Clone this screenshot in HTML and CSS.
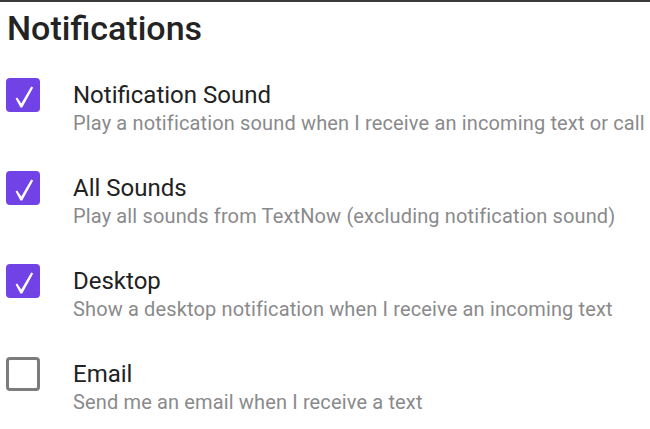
FILE: index.html
```html
<!DOCTYPE html>
<html>
<head>
<meta charset="utf-8">
<link rel="stylesheet" href="styles.css">
</head>
<body>
<div class="page">
  <h1 class="heading">Notifications</h1>
  <div class="list">
    <div class="row">
      <span class="box checked"><svg viewBox="0 0 34 34" width="34" height="34"><path d="M9.6 20.4 L11.2 19.4 L15.3 25.4 L25.2 8.6 L27.2 9.6 L16.2 29.4 L14.4 29.4 Z" fill="#fff"/></svg></span>
      <div class="text">
        <div class="title">Notification Sound</div>
        <div class="desc">Play a notification sound when I receive an incoming text or call</div>
      </div>
    </div>
    <div class="row">
      <span class="box checked"><svg viewBox="0 0 34 34" width="34" height="34"><path d="M9.6 20.4 L11.2 19.4 L15.3 25.4 L25.2 8.6 L27.2 9.6 L16.2 29.4 L14.4 29.4 Z" fill="#fff"/></svg></span>
      <div class="text">
        <div class="title">All Sounds</div>
        <div class="desc">Play all sounds from TextNow (excluding notification sound)</div>
      </div>
    </div>
    <div class="row">
      <span class="box checked"><svg viewBox="0 0 34 34" width="34" height="34"><path d="M9.6 20.4 L11.2 19.4 L15.3 25.4 L25.2 8.6 L27.2 9.6 L16.2 29.4 L14.4 29.4 Z" fill="#fff"/></svg></span>
      <div class="text">
        <div class="title">Desktop</div>
        <div class="desc">Show a desktop notification when I receive an incoming text</div>
      </div>
    </div>
    <div class="row">
      <span class="box"></span>
      <div class="text">
        <div class="title">Email</div>
        <div class="desc">Send me an email when I receive a text</div>
      </div>
    </div>
  </div>
</div>
</body>
</html>
```
FILE: styles.css
```css
html, body {
  margin: 0;
  padding: 0;
  background: #fff;
}
body {
  font-family: Roboto, "Liberation Sans", sans-serif;
  border-top: 2px solid #3a3a3a;
  overflow: hidden;
}
.page {
  padding: 6px 0 0 0;
}
.heading {
  margin: 0 0 0 7px;
  font-size: 34px;
  line-height: 40px;
  font-weight: 500;
  color: #232323;
}
.list {
  display: flex;
  flex-direction: column;
  gap: 35px;
  margin-top: 30px;
}
.row {
  display: flex;
  align-items: flex-start;
  gap: 33px;
  padding-left: 6px;
}
.box {
  width: 34px;
  height: 34px;
  flex: none;
  box-sizing: border-box;
  border: 3px solid #7c7c7e;
  border-radius: 4px;
  display: block;
}
.box.checked {
  border: none;
  background: #7143e7;
}
.box svg {
  display: block;
}
.text {
  padding-top: 3px;
}
.title {
  font-size: 24px;
  line-height: 28px;
  color: #222;
}
.desc {
  margin-top: 1px;
  font-size: 20px;
  line-height: 26px;
  letter-spacing: 0.14px;
  color: #8a8a8c;
  white-space: nowrap;
}
```
